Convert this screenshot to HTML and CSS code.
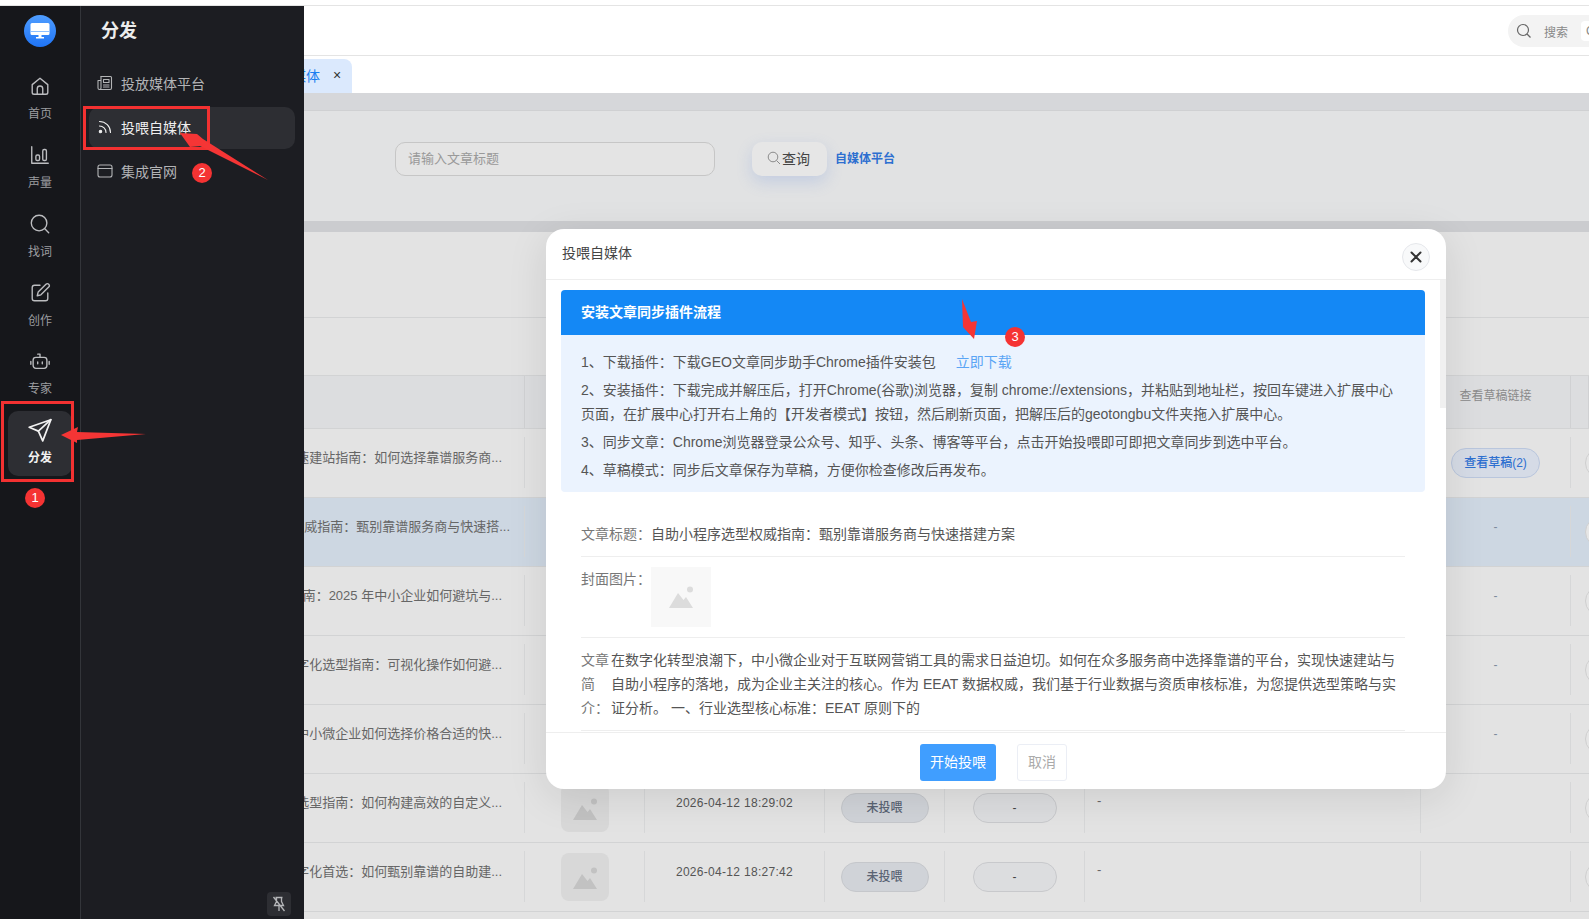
FILE: index.html
```html
<!DOCTYPE html>
<html lang="zh-CN">
<head>
    <meta charset="utf-8">
    <meta name="viewport" content="width=device-width, initial-scale=1.0">
    <title>投喂自媒体</title>
    <link rel="stylesheet" href="styles.css">
</head>
<body>
    <svg class="defs" width="0" height="0">
        <symbol id="pic" viewBox="0 0 24 22">
            <circle cx="21" cy="3.500" r="3"/>
            <path d="M0 22 L9 7 L14.500 14 L17 11 L24 22 Z"/>
        </symbol>
    </svg>

    <div class="page">
        <div class="top-strip"></div>
        <div class="layout">
            <div class="rail">
                <div class="logo">
                    <svg width="20" height="18" viewBox="0 0 20 18"><path d="M2 1h16a1.500 1.500 0 0 1 1.500 1.500v9a1.500 1.500 0 0 1-1.500 1.500H2A1.500 1.500 0 0 1 .5 11.500v-9A1.500 1.500 0 0 1 2 1z" fill="#fff"/><path d="M.5 9.500h19" stroke="#8fc0ff" stroke-width="1"/><path d="M8.500 13h3v2h2.500v1.500H6V15h2.500z" fill="#fff"/></svg>
                </div>
                <a class="rail-item">
                    <svg class="rail-icon" viewBox="0 0 24 24"><path d="M3.500 10.500 12 3.500l8.500 7V19a2 2 0 0 1-2 2h-13a2 2 0 0 1-2-2z"/><path d="M9 21v-6a3 3 0 0 1 6 0v6"/></svg>
                    <span>首页</span>
                </a>
                <a class="rail-item">
                    <svg class="rail-icon" viewBox="0 0 24 24"><path d="M3 3v18h18"/><rect x="7.500" y="12" width="4" height="6" rx="1.500"/><rect x="15" y="6" width="4" height="12" rx="1.500"/></svg>
                    <span>声量</span>
                </a>
                <a class="rail-item">
                    <svg class="rail-icon" viewBox="0 0 24 24"><circle cx="11" cy="11" r="8.500"/><path d="m17.500 17.500 4 4"/></svg>
                    <span>找词</span>
                </a>
                <a class="rail-item">
                    <svg class="rail-icon" viewBox="0 0 24 24"><path d="M12 3.500H6a2.500 2.500 0 0 0-2.500 2.500v12A2.500 2.500 0 0 0 6 20.500h12a2.500 2.500 0 0 0 2.500-2.500v-6"/><path d="M18.500 2.500a2.100 2.100 0 0 1 3 3L13 14l-4 1 1-4z"/></svg>
                    <span>创作</span>
                </a>
                <a class="rail-item">
                    <svg class="rail-icon rail-icon-bot" viewBox="0 0 24 24"><rect x="4.500" y="8" width="15" height="12" rx="3"/><path d="M12 8V4.500H9.500M2 12.500v3M22 12.500v3M9.500 13v2M14.500 13v2"/></svg>
                    <span>专家</span>
                </a>
                <a class="rail-item rail-item-active">
                    <svg class="rail-icon" viewBox="0 0 24 24"><path d="M22 2.500 2 9.500l8.500 3.500 4 9z"/><path d="m22 2.500-11.500 10.500"/></svg>
                    <span>分发</span>
                </a>
            </div>

            <div class="panel">
                <h2 class="panel-title">分发</h2>
                <a class="menu-item">
                    <svg class="menu-icon" viewBox="0 0 16 16"><path d="M4 1.500h9.500a1 1 0 0 1 1 1v10.500a1.500 1.500 0 0 1-1.500 1.500H3"/><path d="M4 1.500V13a1.500 1.500 0 0 1-3 0V5.500h3"/><path d="M6.500 4.500h5.500v3H6.500zM6.500 10h5.500M6.500 12h5.500"/></svg>
                    <span>投放媒体平台</span>
                </a>
                <a class="menu-item menu-item-active">
                    <svg class="menu-icon" viewBox="0 0 16 16"><path d="M2.500 7a6.500 6.500 0 0 1 6.500 6.500"/><path d="M2.500 2.500a11 11 0 0 1 11 11"/><circle cx="3.500" cy="12.500" r="1.200" fill="currentColor"/></svg>
                    <span>投喂自媒体</span>
                </a>
                <a class="menu-item">
                    <svg class="menu-icon" viewBox="0 0 16 16"><rect x="1" y="2" width="14" height="12" rx="2"/><path d="M1 5.500h14"/></svg>
                    <span>集成官网</span>
                </a>
                <div class="pin-btn">
                    <svg width="14" height="16" viewBox="0 0 14 16"><path d="M3.500 1.500h7M4.500 1.500v4L2.500 9.500h9l-2-4v-4M7 9.500V15M1.500 1l11 14"/></svg>
                </div>
            </div>

            <div class="main">
                <div class="header">
                    <div class="search-box">
                        <svg width="16" height="16" viewBox="0 0 16 16"><circle cx="7" cy="7" r="5.500"/><path d="m11 11 3.500 3.500"/></svg>
                        <span class="search-label">搜索</span>
                        <span class="search-key">Ctrl K</span>
                    </div>
                </div>
                <div class="tabs">
                    <div class="tab">
                        <span>投喂自媒体</span>
                        <span class="tab-close">×</span>
                    </div>
                </div>

                <div class="content">
                    <div class="filter">
                        <div class="filter-input">请输入文章标题</div>
                        <div class="filter-btn">
                            <svg width="14" height="14" viewBox="0 0 14 14"><circle cx="6" cy="6" r="4.800"/><path d="m9.500 9.500 3.500 3.500"/></svg>
                            <span>查询</span>
                        </div>
                        <a class="filter-link">自媒体平台</a>
                    </div>

                    <div class="card">
                        <div class="card-top"></div>
                        <div class="card-sub"></div>
                        <div class="row-head">
                            <div class="head-cell"></div>
                            <div class="head-cell"></div>
                            <div class="head-cell"></div>
                            <div class="head-cell"></div>
                            <div class="head-cell"></div>
                            <div class="head-cell"></div>
                            <div class="head-cell">查看草稿链接</div>
                            <div class="head-cell"></div>
                        </div>

                        <div class="row">
                            <div class="cell cell-title">自助小程序快速建站指南：如何选择靠谱服务商...</div>
                            <div class="cell"></div>
                            <div class="cell"></div>
                            <div class="cell"></div>
                            <div class="cell"></div>
                            <div class="cell"></div>
                            <div class="cell cell-center"><a class="pill pill-draft">查看草稿(2)</a></div>
                            <div class="cell cell-last"><span class="pill pill-edge"></span></div>
                        </div>
                        <div class="row row-selected">
                            <div class="cell cell-title cell-title-long">自助小程序选型权威指南：甄别靠谱服务商与快速搭...</div>
                            <div class="cell"></div>
                            <div class="cell"></div>
                            <div class="cell"></div>
                            <div class="cell"></div>
                            <div class="cell"></div>
                            <div class="cell cell-dash">-</div>
                            <div class="cell cell-last"><span class="pill pill-edge"></span></div>
                        </div>
                        <div class="row">
                            <div class="cell cell-title">自助建站选型指南：2025 年中小企业如何避坑与...</div>
                            <div class="cell"></div>
                            <div class="cell"></div>
                            <div class="cell"></div>
                            <div class="cell"></div>
                            <div class="cell"></div>
                            <div class="cell cell-dash">-</div>
                            <div class="cell cell-last"><span class="pill pill-edge"></span></div>
                        </div>
                        <div class="row">
                            <div class="cell cell-title">企业数字化选型指南：可视化操作如何避...</div>
                            <div class="cell"></div>
                            <div class="cell"></div>
                            <div class="cell"></div>
                            <div class="cell"></div>
                            <div class="cell"></div>
                            <div class="cell cell-dash">-</div>
                            <div class="cell cell-last"><span class="pill pill-edge"></span></div>
                        </div>
                        <div class="row">
                            <div class="cell cell-title">中小微企业如何选择价格合适的快...</div>
                            <div class="cell"></div>
                            <div class="cell"></div>
                            <div class="cell"></div>
                            <div class="cell"></div>
                            <div class="cell"></div>
                            <div class="cell cell-dash">-</div>
                            <div class="cell cell-last"><span class="pill pill-edge"></span></div>
                        </div>
                        <div class="row">
                            <div class="cell cell-title">小程序选型指南：如何构建高效的自定义...</div>
                            <div class="cell cell-center"><svg class="thumb"><use href="#pic" x="12" y="14" width="24" height="22"/></svg></div>
                            <div class="cell cell-date">2026-04-12 18:29:02</div>
                            <div class="cell cell-center"><span class="pill pill-status">未投喂</span></div>
                            <div class="cell cell-center"><span class="pill pill-empty">-</span></div>
                            <div class="cell cell-text">-</div>
                            <div class="cell cell-dash"></div>
                            <div class="cell cell-last"><span class="pill pill-edge"></span></div>
                        </div>
                        <div class="row">
                            <div class="cell cell-title">企业数字化首选：如何甄别靠谱的自助建...</div>
                            <div class="cell cell-center"><svg class="thumb"><use href="#pic" x="12" y="14" width="24" height="22"/></svg></div>
                            <div class="cell cell-date">2026-04-12 18:27:42</div>
                            <div class="cell cell-center"><span class="pill pill-status">未投喂</span></div>
                            <div class="cell cell-center"><span class="pill pill-empty">-</span></div>
                            <div class="cell cell-text">-</div>
                            <div class="cell cell-dash"></div>
                            <div class="cell cell-last"><span class="pill pill-edge"></span></div>
                        </div>
                    </div>
                </div>
            </div>
        </div>

        <div class="modal">
            <div class="modal-head">
                <span class="modal-title">投喂自媒体</span>
                <div class="modal-close">
                    <svg width="12" height="12" viewBox="0 0 12 12"><path d="m1.500 1.500 9 9M10.500 1.500l-9 9"/></svg>
                </div>
            </div>
            <div class="modal-thumb"></div>
            <div class="modal-body">
                <div class="guide">
                    <div class="guide-title">安装文章同步插件流程</div>
                    <div class="guide-body">
                        <p>1、下载插件：下载GEO文章同步助手Chrome插件安装包<a class="guide-link">立即下载</a></p>
                        <p>2、安装插件：下载完成并解压后，打开Chrome(谷歌)浏览器，复制 chrome://extensions，并粘贴到地址栏，按回车键进入扩展中心页面，在扩展中心打开右上角的【开发者模式】按钮，然后刷新页面，把解压后的geotongbu文件夹拖入扩展中心。</p>
                        <p>3、同步文章：Chrome浏览器登录公众号、知乎、头条、博客等平台，点击开始投喂即可即把文章同步到选中平台。</p>
                        <p>4、草稿模式：同步后文章保存为草稿，方便你检查修改后再发布。</p>
                    </div>
                </div>
                <div class="details">
                    <div class="detail-row detail-title">
                        <span class="detail-label">文章标题：</span>
                        <span>自助小程序选型权威指南：甄别靠谱服务商与快速搭建方案</span>
                    </div>
                    <div class="detail-row detail-cover">
                        <span class="detail-label">封面图片：</span>
                        <svg class="cover"><use href="#pic" x="18" y="19" width="24" height="22"/></svg>
                    </div>
                    <div class="detail-row detail-summary">
                        <span class="detail-label detail-label-narrow">文章简介：</span>
                        <span class="summary-text">在数字化转型浪潮下，中小微企业对于互联网营销工具的需求日益迫切。如何在众多服务商中选择靠谱的平台，实现快速建站与自助小程序的落地，成为企业主关注的核心。作为 EEAT 数据权威，我们基于行业数据与资质审核标准，为您提供选型策略与实证分析。 一、行业选型核心标准：EEAT 原则下的</span>
                    </div>
                </div>
            </div>
            <div class="modal-foot">
                <a class="btn btn-primary">开始投喂</a>
                <a class="btn btn-cancel">取消</a>
            </div>
        </div>

        <!-- 标注 -->
        <div class="mark-box mark-box-1"></div>
        <div class="mark-box mark-box-2"></div>
        <svg class="mark-arrows" width="1589" height="919">
            <polygon points="61,435 78,427 77,432 146,434 77,440 77,443"/>
            <polygon points="180,133 197,134 203,139 268,180 200,146 190,147"/>
            <polygon points="962,299 971,322 977,321 974,339 963,327"/>
        </svg>
        <span class="badge badge-1">1</span>
        <span class="badge badge-2">2</span>
        <span class="badge badge-3">3</span>
    </div>
</body>
</html>
```
FILE: styles.css
```css
* {
    box-sizing: border-box;
}

body {
    margin: 0;
    padding: 0;
    height: 100vh;
    overflow: hidden;
    background-color: #fff;
    font-family: "Liberation Sans", "Noto Sans CJK SC", sans-serif;
    font-size: 14px;
    color: #333;
}

a {
    text-decoration: none;
}

p {
    margin: 0;
}

.defs {
    position: absolute;
}

.page {
    position: relative;
    height: 100vh;
    overflow: hidden;
}

.top-strip {
    height: 6px;
    border-bottom: 1px solid #e4e4e4;
}

.layout {
    display: flex;
    height: calc(100vh - 6px);
}

/* 左侧图标栏 */
.rail {
    flex: none;
    width: 81px;
    display: flex;
    flex-direction: column;
    align-items: center;
    gap: 4px;
    padding-top: 9px;
    background-color: #16171b;
    border-right: 1px solid #33353a;
}

.logo {
    width: 32px;
    height: 32px;
    margin-bottom: 15px;
    display: flex;
    align-items: center;
    justify-content: center;
    border-radius: 50%;
    background: linear-gradient(#4f9dff, #1f74f6);
}

.rail-item {
    width: 64px;
    height: 65px;
    display: flex;
    flex-direction: column;
    align-items: center;
    gap: 9px;
    padding-top: 9px;
    border-radius: 10px;
    color: #9c9da0;
    font-size: 12px;
    line-height: 16px;
}

.rail-icon {
    width: 22px;
    height: 22px;
    flex: none;
    fill: none;
    stroke: #bcbdc0;
    stroke-width: 1.5;
    stroke-linecap: round;
    stroke-linejoin: round;
}

.rail-icon-bot {
    margin-top: -1px;
    margin-bottom: 0;
}

.rail-item-active {
    gap: 7px;
    padding-top: 6px;
    background-color: #2d2e33;
    color: #f2f2f2;
    font-weight: 700;
}

.rail-item-active .rail-icon {
    width: 26px;
    height: 26px;
    stroke: #f2f2f2;
    stroke-width: 1.6;
}

/* 二级菜单 */
.panel {
    flex: none;
    width: 223px;
    display: flex;
    flex-direction: column;
    gap: 2px;
    background-color: #1c1d22;
}

.panel-title {
    margin: 0;
    padding: 12px 0 17px 20px;
    font-size: 18px;
    line-height: 26px;
    color: #ececec;
}

.menu-item {
    height: 42px;
    margin: 0 9px 0 8px;
    padding: 0 0 2px 8px;
    display: flex;
    align-items: center;
    gap: 8px;
    border-radius: 10px;
    color: #b3b4b6;
}

.menu-icon {
    width: 16px;
    height: 16px;
    fill: none;
    stroke: currentColor;
    stroke-width: 1.1;
    stroke-linecap: round;
    stroke-linejoin: round;
}

.menu-item-active {
    background-color: #2d2e33;
    color: #efefef;
}

.pin-btn {
    width: 24px;
    height: 24px;
    margin: auto 13px 3px auto;
    display: flex;
    align-items: center;
    justify-content: center;
    border-radius: 4px;
    background-color: #2d2e33;
}

.pin-btn svg {
    fill: none;
    stroke: #b4b5b8;
    stroke-width: 1.3;
}

/* 主区域 */
.main {
    flex: 1;
    min-width: 0;
    display: flex;
    flex-direction: column;
    overflow: hidden;
}

.header {
    flex: none;
    height: 50px;
    display: flex;
    justify-content: flex-end;
    padding-top: 9px;
    border-bottom: 1px solid #e4e4e4;
}

.search-box {
    flex: none;
    width: 130px;
    height: 32px;
    margin-right: -49px;
    padding-left: 8px;
    display: flex;
    align-items: center;
    border-radius: 16px;
    background-color: #f3f3f3;
    color: #888;
    font-size: 12px;
}

.search-box svg {
    flex: none;
    fill: none;
    stroke: #666;
    stroke-width: 1.2;
}

.search-label {
    margin-left: 12px;
}

.search-key {
    margin-left: 13px;
    padding: 3px 5px;
    background-color: #fff;
    border-radius: 4px;
    white-space: nowrap;
}

.tabs {
    flex: none;
    height: 37px;
    padding-top: 3px;
    background-color: #fff;
}

.tab {
    width: 119px;
    height: 34px;
    margin-left: -71px;
    padding: 0 0 2px 17px;
    display: flex;
    align-items: center;
    gap: 13px;
    border-top-right-radius: 8px;
    background-color: #dbe9fd;
    color: #1a7ff0;
}

.tab-close {
    color: #333;
    font-size: 14px;
}

.content {
    flex: 1;
    min-height: 0;
    display: flex;
    flex-direction: column;
    padding-top: 17px;
    background-color: #d6d7da;
}

.filter {
    flex: none;
    height: 122px;
    padding: 31px 0 0 91px;
    display: flex;
    align-items: flex-start;
    background-color: #e1e2e3;
    border-top: 1px solid #cfd0d2;
    border-bottom: 11px solid #cbcccf;
}

.filter-input {
    width: 320px;
    height: 34px;
    padding-left: 12px;
    line-height: 32px;
    border: 1px solid #c6c6c6;
    border-radius: 10px;
    background-color: #e4e4e4;
    color: #999;
    font-size: 13px;
}

.filter-btn {
    width: 75px;
    height: 34px;
    margin-left: 37px;
    padding: 0 2px 2px 0;
    display: flex;
    align-items: center;
    justify-content: center;
    gap: 1px;
    border-radius: 10px;
    background-color: #e6e6e6;
    box-shadow: 0 6px 16px rgba(90, 130, 220, 0.22);
    color: #444;
}

.filter-btn svg {
    fill: none;
    stroke: #8b8b8b;
    stroke-width: 1;
}

.filter-link {
    margin-left: 8px;
    color: #2d6fd0;
    font-size: 12px;
    font-weight: 700;
    line-height: 34px;
}

/* 表格 */
.card {
    flex: 1;
    background-color: #e3e3e3;
}

.card-top {
    height: 86px;
    border-bottom: 1px solid #d2d3d4;
}

.card-sub {
    height: 58px;
    border-bottom: 1px solid #d2d3d4;
}

.row-head,
.row {
    display: grid;
    grid-template-columns: 221px 120px 180px 120px 140px 336px 150px 1fr;
    border-bottom: 1px solid #d2d3d4;
}

.row-head {
    height: 53px;
    background-color: #dcdddf;
}

.head-cell {
    padding-top: 12px;
    border-right: 1px solid #d0d1d3;
    color: #8a8a8a;
    font-size: 12px;
    line-height: 16px;
    text-align: center;
}

.row {
    height: 69px;
    font-size: 13px;
    color: #666;
}

.row-selected {
    background-color: #cdd7e2;
}

.cell {
    min-width: 0;
    margin: 8px 0 9px;
    border-right: 1px solid #d6d7d8;
    line-height: 20px;
}

.cell-title {
    display: flex;
    justify-content: flex-end;
    padding: 11px 22px 0 0;
    overflow: hidden;
    white-space: nowrap;
}

.cell-title-long {
    padding-right: 14px;
}

.cell-center {
    display: flex;
    align-items: center;
    justify-content: center;
}

.cell-date {
    padding-top: 11px;
    color: #555;
    font-size: 12px;
    letter-spacing: 0.3px;
    text-align: center;
}

.cell-text {
    padding: 9px 0 0 12px;
}

.cell-dash {
    padding-top: 11px;
    color: #7e8a9c;
    font-size: 12px;
    text-align: center;
}

.cell-last {
    display: flex;
    align-items: center;
    padding-left: 14px;
    border-right: 0;
}

.thumb {
    width: 48px;
    height: 48px;
    border-radius: 8px;
    background-color: #d8d8d8;
    fill: #c2c2c2;
}

.pill {
    height: 30px;
    display: flex;
    align-items: center;
    justify-content: center;
    border-radius: 15px;
    font-size: 12px;
    white-space: nowrap;
}

.pill-status {
    width: 88px;
    background-color: #d0d3d8;
    border: 1px solid #c5c7cb;
    color: #5a6474;
    font-weight: 500;
}

.pill-empty {
    width: 84px;
    background-color: #dcdddf;
    border: 1px solid #c8c9cc;
    color: #444;
}

.pill-draft {
    width: 89px;
    background-color: #d5dbe6;
    border: 1px solid #b9c6dd;
    color: #2d6fd0;
    font-weight: 500;
}

.pill-edge {
    flex: none;
    width: 40px;
    background-color: #e6e6e6;
    border: 1px solid #cfcfcf;
}

/* 弹窗 */
.modal {
    position: absolute;
    left: 546px;
    top: 229px;
    width: 900px;
    height: 560px;
    display: flex;
    flex-direction: column;
    overflow: hidden;
    border-radius: 18px;
    background-color: #fff;
    box-shadow: 0 8px 40px rgba(0, 0, 0, 0.1);
}

.modal-head {
    flex: none;
    height: 51px;
    padding: 0 16px;
    display: flex;
    align-items: center;
    justify-content: space-between;
    border-bottom: 1px solid #eee;
    color: #444;
}

.modal-title {
    margin-bottom: 4px;
}

.modal-close {
    width: 28px;
    height: 28px;
    margin-top: 5px;
    display: flex;
    align-items: center;
    justify-content: center;
    border: 1px solid #e5e7eb;
    border-radius: 50%;
    background-color: #f8f9fa;
}

.modal-close svg {
    fill: none;
    stroke: #333;
    stroke-width: 2;
    stroke-linecap: round;
}

.modal-thumb {
    position: absolute;
    right: 0;
    top: 51px;
    width: 6px;
    height: 128px;
    background-color: #f0f0f0;
}

.modal-body {
    flex: 1;
    min-height: 0;
    overflow: hidden;
    padding: 10px 21px 0 15px;
}

.guide {
    border-radius: 4px;
    overflow: hidden;
    background-color: #ebf3fe;
}

.guide-title {
    height: 45px;
    padding-left: 20px;
    background-color: #1488f5;
    color: #fff;
    font-weight: 700;
    line-height: 45px;
}

.guide-body {
    display: flex;
    flex-direction: column;
    gap: 4px;
    padding: 15px 20px 10px;
    color: #555;
    line-height: 24px;
}

.guide-link {
    margin-left: 20px;
    color: #5aa5f5;
}

.details {
    padding: 30px 20px 0;
}

.detail-row {
    display: flex;
    align-items: flex-start;
    border-bottom: 1px solid #eee;
    line-height: 24px;
    color: #555;
}

.detail-title {
    padding-bottom: 10px;
}

.detail-cover,
.detail-summary {
    padding: 10px 0;
}

.detail-label {
    flex: none;
    width: 70px;
    color: #777;
}

.detail-label-narrow {
    width: 30px;
}

.cover {
    width: 60px;
    height: 60px;
    background-color: #f8f8f8;
    fill: #dcdcdc;
}

.summary-text {
    flex: 1;
}

.modal-foot {
    flex: none;
    height: 57px;
    padding: 11px 0 0 374px;
    display: flex;
    align-items: flex-start;
    gap: 21px;
    border-top: 1px solid #eee;
}

.btn {
    height: 37px;
    padding-bottom: 3px;
    display: flex;
    align-items: center;
    justify-content: center;
    border-radius: 3px;
}

.btn-primary {
    width: 76px;
    background-color: #409eff;
    color: #fff;
}

.btn-cancel {
    width: 50px;
    border: 1px solid #ebeef5;
    color: #aaa;
}

/* 红色标注 */
.mark-box {
    position: absolute;
    border: 3px solid #f33131;
}

.mark-box-1 {
    left: 1px;
    top: 401px;
    width: 73px;
    height: 81px;
}

.mark-box-2 {
    left: 83px;
    top: 106px;
    width: 127px;
    height: 44px;
}

.mark-arrows {
    position: absolute;
    left: 0;
    top: 0;
    fill: #f53535;
}

.badge {
    position: absolute;
    width: 20px;
    height: 20px;
    border-radius: 50%;
    background-color: #f53333;
    color: #fff;
    font-size: 13px;
    line-height: 20px;
    text-align: center;
}

.badge-1 {
    left: 25px;
    top: 488px;
}

.badge-2 {
    left: 192px;
    top: 163px;
}

.badge-3 {
    left: 1005px;
    top: 327px;
}
```
